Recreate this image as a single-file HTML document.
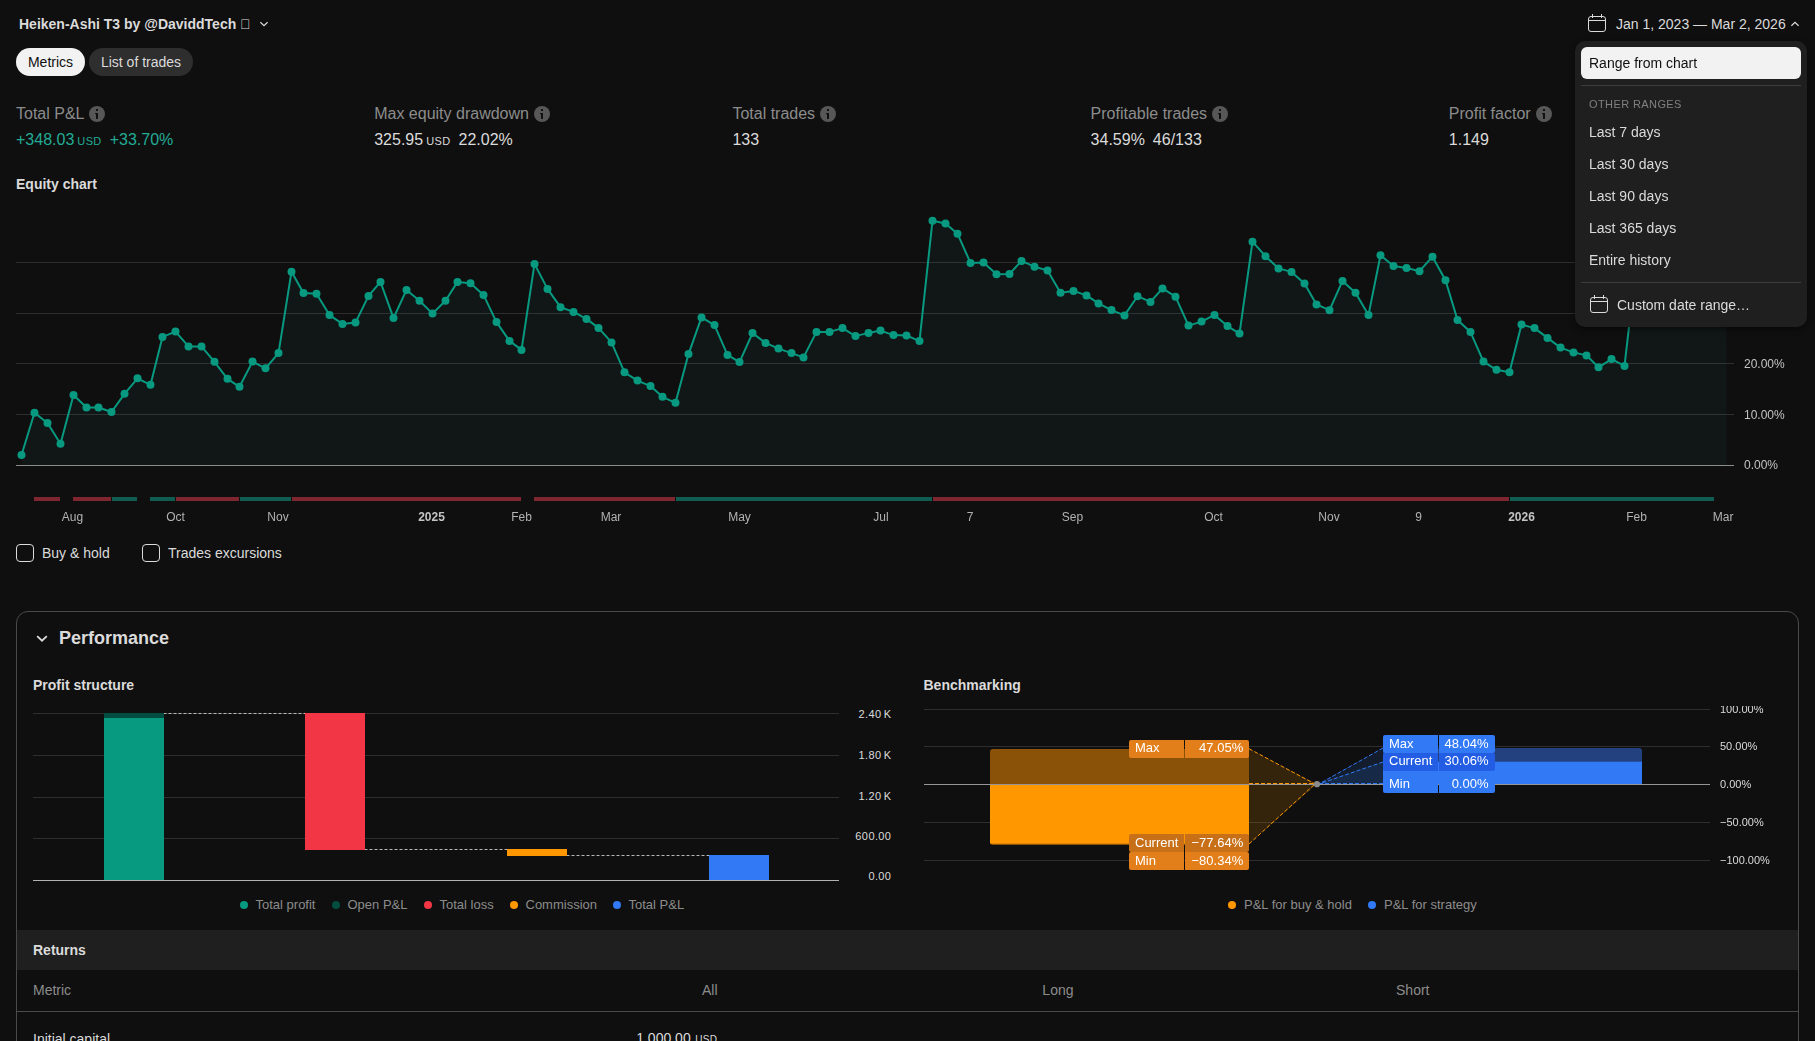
<!DOCTYPE html>
<html><head><meta charset="utf-8"><title>Strategy report</title>
<style>
*{box-sizing:border-box;margin:0;padding:0}
html,body{width:1815px;height:1041px;overflow:hidden;background:#0f0f0f}
body{position:relative;font-family:"Liberation Sans",sans-serif;font-size:14px;color:#dbdbdb}
.abs{position:absolute;white-space:nowrap}
.t14{font-size:14px;line-height:18px}
.b{font-weight:bold}
.lbl{font-size:16px;line-height:24px;color:#8c8c8c}
.val{font-size:16px;line-height:24px;color:#dbdbdb}
.usd{font-size:11px;letter-spacing:0.4px;margin-left:3px}
.v2{margin-left:8px}
.grn{color:#22ab94}
.info{position:absolute;width:16px;height:16px}
.tl{font-size:12px;line-height:16px;text-align:center;color:#b2b2b2}
.gs{will-change:transform}
.ax{font-size:11px;line-height:14px;color:#dbdbdb}
.ax12{font-size:12px;line-height:16px;color:#c4c4c4}
.lg{font-size:13px;line-height:16px;color:#8c8c8c}
.dot{position:absolute;width:8px;height:8px;border-radius:50%}
.cb{position:absolute;width:18px;height:18px;border:1.5px solid #dbdbdb;border-radius:4px}
.mi{position:absolute;left:14px;font-size:14px;line-height:18px;color:#dbdbdb}
.tag{position:absolute;height:18px;font-size:13px;line-height:16px;color:#fff}
</style></head><body>

<!-- header -->
<div class="abs b t14" style="left:19px;top:15px;color:#dbdbdb">Heiken-Ashi T3 by @DaviddTech &#xE000;</div>
<svg class="abs" style="left:258px;top:19px" width="12" height="10" viewBox="0 0 12 10"><path d="M2.4 3.3 L6 6.6 L9.6 3.3" fill="none" stroke="#dbdbdb" stroke-width="1.2"/></svg>

<!-- pills -->
<div class="abs t14" style="left:16px;top:48px;width:69px;height:28px;border-radius:14px;background:#f2f2f2;color:#0f0f0f;text-align:center;line-height:28px">Metrics</div>
<div class="abs t14" style="left:89px;top:48px;width:104px;height:28px;border-radius:14px;background:#2e2e2e;color:#dbdbdb;text-align:center;line-height:28px">List of trades</div>

<!-- metrics -->
<div class="abs lbl" style="left:16px;top:102px">Total P&amp;L</div>
<div class="abs val grn" style="left:16px;top:128px">+348.03<span class="usd">USD</span><span class="v2">+33.70%</span></div>
<div class="abs lbl" style="left:374.2px;top:102px">Max equity drawdown</div>
<div class="abs val" style="left:374.2px;top:128px">325.95<span class="usd">USD</span><span class="v2">22.02%</span></div>
<div class="abs lbl" style="left:732.4px;top:102px">Total trades</div>
<div class="abs val" style="left:732.4px;top:128px">133</div>
<div class="abs lbl" style="left:1090.6px;top:102px">Profitable trades</div>
<div class="abs val" style="left:1090.6px;top:128px">34.59%<span class="v2">46/133</span></div>
<div class="abs lbl" style="left:1448.8px;top:102px">Profit factor</div>
<div class="abs val" style="left:1448.8px;top:128px">1.149</div>
<svg class="info" style="left:89px;top:106px" viewBox="0 0 16 16"><circle cx="8" cy="8" r="8" fill="#575757"/><rect x="7" y="7.1" width="2" height="5.8" fill="#0f0f0f"/><rect x="5.9" y="7.1" width="2" height="1" fill="#0f0f0f"/><rect x="7" y="3.05" width="2" height="1.9" rx="0.3" fill="#0f0f0f"/></svg>
<svg class="info" style="left:534px;top:106px" viewBox="0 0 16 16"><circle cx="8" cy="8" r="8" fill="#575757"/><rect x="7" y="7.1" width="2" height="5.8" fill="#0f0f0f"/><rect x="5.9" y="7.1" width="2" height="1" fill="#0f0f0f"/><rect x="7" y="3.05" width="2" height="1.9" rx="0.3" fill="#0f0f0f"/></svg>
<svg class="info" style="left:820px;top:106px" viewBox="0 0 16 16"><circle cx="8" cy="8" r="8" fill="#575757"/><rect x="7" y="7.1" width="2" height="5.8" fill="#0f0f0f"/><rect x="5.9" y="7.1" width="2" height="1" fill="#0f0f0f"/><rect x="7" y="3.05" width="2" height="1.9" rx="0.3" fill="#0f0f0f"/></svg>
<svg class="info" style="left:1212px;top:106px" viewBox="0 0 16 16"><circle cx="8" cy="8" r="8" fill="#575757"/><rect x="7" y="7.1" width="2" height="5.8" fill="#0f0f0f"/><rect x="5.9" y="7.1" width="2" height="1" fill="#0f0f0f"/><rect x="7" y="3.05" width="2" height="1.9" rx="0.3" fill="#0f0f0f"/></svg>
<svg class="info" style="left:1536px;top:106px" viewBox="0 0 16 16"><circle cx="8" cy="8" r="8" fill="#575757"/><rect x="7" y="7.1" width="2" height="5.8" fill="#0f0f0f"/><rect x="5.9" y="7.1" width="2" height="1" fill="#0f0f0f"/><rect x="7" y="3.05" width="2" height="1.9" rx="0.3" fill="#0f0f0f"/></svg>

<div class="abs b t14" style="left:16px;top:175px;color:#dbdbdb">Equity chart</div>

<svg class="abs" style="left:0;top:200px" width="1815" height="290" viewBox="0 200 1815 290">
<line x1="16" x2="1734" y1="262.5" y2="262.5" stroke="#2e2e2e" stroke-width="1"/>
<line x1="16" x2="1734" y1="313.5" y2="313.5" stroke="#2e2e2e" stroke-width="1"/>
<line x1="16" x2="1734" y1="363.5" y2="363.5" stroke="#2e2e2e" stroke-width="1"/>
<line x1="16" x2="1734" y1="414.5" y2="414.5" stroke="#2e2e2e" stroke-width="1"/>
<polygon points="21.5,465 21.5,455 34.5,412.8 47.5,423 60.5,443.8 73.5,395 86.5,407.5 98.5,407.5 111.5,412 124.5,393.8 137.5,378.3 150.5,384.8 162.5,336.9 175.5,331.6 188.5,346.4 201.5,346.4 214.5,361.8 227.5,378.8 239.5,386.8 252.5,361.6 265.5,368.3 278.5,353.1 291.5,271.7 303.5,292.9 316.5,293.7 329.5,315.1 342.5,323.9 355.5,322.6 368.5,295.9 380.5,281.9 393.5,318.1 406.5,289.9 419.5,300.7 432.5,313.6 445.5,300.7 457.5,281.9 470.5,283.2 483.5,294.9 496.5,322.1 509.5,340.9 521.5,349.9 534.5,263.9 547.5,288.9 560.5,307.2 573.5,311.9 586.5,318.9 598.5,327.9 611.5,342.4 624.5,372.3 637.5,380.6 650.5,386.1 662.5,396.8 675.5,402.8 688.5,354.1 701.5,317.4 714.5,325.1 727.5,354.9 739.5,362.1 752.5,333.1 765.5,342.9 778.5,348.6 791.5,353.1 803.5,357.4 816.5,331.9 829.5,331.9 842.5,328.1 855.5,336.1 868.5,332.9 880.5,330.6 893.5,335.1 906.5,335.4 919.5,341.1 932.5,220.7 945.5,223.5 957.5,233.7 970.5,262.9 983.5,262.4 996.5,274.2 1009.5,273.9 1021.5,260.9 1034.5,266.7 1047.5,270.4 1060.5,292.7 1073.5,290.9 1086.5,295.4 1098.5,303.4 1111.5,310.1 1124.5,315.4 1137.5,296.2 1150.5,301.9 1162.5,288.4 1175.5,296.7 1188.5,325.6 1201.5,321.6 1214.5,314.9 1227.5,326.1 1239.5,333.6 1252.5,241.7 1265.5,256.2 1278.5,268.4 1291.5,271.9 1304.5,283.4 1316.5,304.4 1329.5,310.2 1342.5,280.9 1355.5,292.7 1368.5,314.9 1380.5,255.2 1393.5,265.9 1406.5,267.9 1419.5,271.2 1432.5,256.7 1445.5,280.2 1457.5,319.9 1470.5,332.1 1483.5,361.6 1496.5,369.8 1509.5,372.3 1521.5,324.6 1534.5,328.1 1547.5,337.9 1560.5,347.6 1573.5,352.4 1586.5,355.4 1598.5,367.3 1611.5,359.1 1624.5,365.9 1637.5,254 1650.5,262 1662.5,258 1675.5,270 1688.5,266 1701.5,280 1714.5,287 1726.5,293.8 1726.5,465" fill="#22ab94" fill-opacity="0.055"/>
<line x1="16" x2="1734" y1="465.5" y2="465.5" stroke="#8c8c8c" stroke-width="1"/>
<polyline points="21.5,455 34.5,412.8 47.5,423 60.5,443.8 73.5,395 86.5,407.5 98.5,407.5 111.5,412 124.5,393.8 137.5,378.3 150.5,384.8 162.5,336.9 175.5,331.6 188.5,346.4 201.5,346.4 214.5,361.8 227.5,378.8 239.5,386.8 252.5,361.6 265.5,368.3 278.5,353.1 291.5,271.7 303.5,292.9 316.5,293.7 329.5,315.1 342.5,323.9 355.5,322.6 368.5,295.9 380.5,281.9 393.5,318.1 406.5,289.9 419.5,300.7 432.5,313.6 445.5,300.7 457.5,281.9 470.5,283.2 483.5,294.9 496.5,322.1 509.5,340.9 521.5,349.9 534.5,263.9 547.5,288.9 560.5,307.2 573.5,311.9 586.5,318.9 598.5,327.9 611.5,342.4 624.5,372.3 637.5,380.6 650.5,386.1 662.5,396.8 675.5,402.8 688.5,354.1 701.5,317.4 714.5,325.1 727.5,354.9 739.5,362.1 752.5,333.1 765.5,342.9 778.5,348.6 791.5,353.1 803.5,357.4 816.5,331.9 829.5,331.9 842.5,328.1 855.5,336.1 868.5,332.9 880.5,330.6 893.5,335.1 906.5,335.4 919.5,341.1 932.5,220.7 945.5,223.5 957.5,233.7 970.5,262.9 983.5,262.4 996.5,274.2 1009.5,273.9 1021.5,260.9 1034.5,266.7 1047.5,270.4 1060.5,292.7 1073.5,290.9 1086.5,295.4 1098.5,303.4 1111.5,310.1 1124.5,315.4 1137.5,296.2 1150.5,301.9 1162.5,288.4 1175.5,296.7 1188.5,325.6 1201.5,321.6 1214.5,314.9 1227.5,326.1 1239.5,333.6 1252.5,241.7 1265.5,256.2 1278.5,268.4 1291.5,271.9 1304.5,283.4 1316.5,304.4 1329.5,310.2 1342.5,280.9 1355.5,292.7 1368.5,314.9 1380.5,255.2 1393.5,265.9 1406.5,267.9 1419.5,271.2 1432.5,256.7 1445.5,280.2 1457.5,319.9 1470.5,332.1 1483.5,361.6 1496.5,369.8 1509.5,372.3 1521.5,324.6 1534.5,328.1 1547.5,337.9 1560.5,347.6 1573.5,352.4 1586.5,355.4 1598.5,367.3 1611.5,359.1 1624.5,365.9 1637.5,254 1650.5,262 1662.5,258 1675.5,270 1688.5,266 1701.5,280 1714.5,287 1726.5,293.8" fill="none" stroke="#089981" stroke-width="2" stroke-linejoin="round"/>
<circle cx="21.5" cy="455" r="4" fill="#089981"/>
<circle cx="34.5" cy="412.8" r="4" fill="#089981"/>
<circle cx="47.5" cy="423" r="4" fill="#089981"/>
<circle cx="60.5" cy="443.8" r="4" fill="#089981"/>
<circle cx="73.5" cy="395" r="4" fill="#089981"/>
<circle cx="86.5" cy="407.5" r="4" fill="#089981"/>
<circle cx="98.5" cy="407.5" r="4" fill="#089981"/>
<circle cx="111.5" cy="412" r="4" fill="#089981"/>
<circle cx="124.5" cy="393.8" r="4" fill="#089981"/>
<circle cx="137.5" cy="378.3" r="4" fill="#089981"/>
<circle cx="150.5" cy="384.8" r="4" fill="#089981"/>
<circle cx="162.5" cy="336.9" r="4" fill="#089981"/>
<circle cx="175.5" cy="331.6" r="4" fill="#089981"/>
<circle cx="188.5" cy="346.4" r="4" fill="#089981"/>
<circle cx="201.5" cy="346.4" r="4" fill="#089981"/>
<circle cx="214.5" cy="361.8" r="4" fill="#089981"/>
<circle cx="227.5" cy="378.8" r="4" fill="#089981"/>
<circle cx="239.5" cy="386.8" r="4" fill="#089981"/>
<circle cx="252.5" cy="361.6" r="4" fill="#089981"/>
<circle cx="265.5" cy="368.3" r="4" fill="#089981"/>
<circle cx="278.5" cy="353.1" r="4" fill="#089981"/>
<circle cx="291.5" cy="271.7" r="4" fill="#089981"/>
<circle cx="303.5" cy="292.9" r="4" fill="#089981"/>
<circle cx="316.5" cy="293.7" r="4" fill="#089981"/>
<circle cx="329.5" cy="315.1" r="4" fill="#089981"/>
<circle cx="342.5" cy="323.9" r="4" fill="#089981"/>
<circle cx="355.5" cy="322.6" r="4" fill="#089981"/>
<circle cx="368.5" cy="295.9" r="4" fill="#089981"/>
<circle cx="380.5" cy="281.9" r="4" fill="#089981"/>
<circle cx="393.5" cy="318.1" r="4" fill="#089981"/>
<circle cx="406.5" cy="289.9" r="4" fill="#089981"/>
<circle cx="419.5" cy="300.7" r="4" fill="#089981"/>
<circle cx="432.5" cy="313.6" r="4" fill="#089981"/>
<circle cx="445.5" cy="300.7" r="4" fill="#089981"/>
<circle cx="457.5" cy="281.9" r="4" fill="#089981"/>
<circle cx="470.5" cy="283.2" r="4" fill="#089981"/>
<circle cx="483.5" cy="294.9" r="4" fill="#089981"/>
<circle cx="496.5" cy="322.1" r="4" fill="#089981"/>
<circle cx="509.5" cy="340.9" r="4" fill="#089981"/>
<circle cx="521.5" cy="349.9" r="4" fill="#089981"/>
<circle cx="534.5" cy="263.9" r="4" fill="#089981"/>
<circle cx="547.5" cy="288.9" r="4" fill="#089981"/>
<circle cx="560.5" cy="307.2" r="4" fill="#089981"/>
<circle cx="573.5" cy="311.9" r="4" fill="#089981"/>
<circle cx="586.5" cy="318.9" r="4" fill="#089981"/>
<circle cx="598.5" cy="327.9" r="4" fill="#089981"/>
<circle cx="611.5" cy="342.4" r="4" fill="#089981"/>
<circle cx="624.5" cy="372.3" r="4" fill="#089981"/>
<circle cx="637.5" cy="380.6" r="4" fill="#089981"/>
<circle cx="650.5" cy="386.1" r="4" fill="#089981"/>
<circle cx="662.5" cy="396.8" r="4" fill="#089981"/>
<circle cx="675.5" cy="402.8" r="4" fill="#089981"/>
<circle cx="688.5" cy="354.1" r="4" fill="#089981"/>
<circle cx="701.5" cy="317.4" r="4" fill="#089981"/>
<circle cx="714.5" cy="325.1" r="4" fill="#089981"/>
<circle cx="727.5" cy="354.9" r="4" fill="#089981"/>
<circle cx="739.5" cy="362.1" r="4" fill="#089981"/>
<circle cx="752.5" cy="333.1" r="4" fill="#089981"/>
<circle cx="765.5" cy="342.9" r="4" fill="#089981"/>
<circle cx="778.5" cy="348.6" r="4" fill="#089981"/>
<circle cx="791.5" cy="353.1" r="4" fill="#089981"/>
<circle cx="803.5" cy="357.4" r="4" fill="#089981"/>
<circle cx="816.5" cy="331.9" r="4" fill="#089981"/>
<circle cx="829.5" cy="331.9" r="4" fill="#089981"/>
<circle cx="842.5" cy="328.1" r="4" fill="#089981"/>
<circle cx="855.5" cy="336.1" r="4" fill="#089981"/>
<circle cx="868.5" cy="332.9" r="4" fill="#089981"/>
<circle cx="880.5" cy="330.6" r="4" fill="#089981"/>
<circle cx="893.5" cy="335.1" r="4" fill="#089981"/>
<circle cx="906.5" cy="335.4" r="4" fill="#089981"/>
<circle cx="919.5" cy="341.1" r="4" fill="#089981"/>
<circle cx="932.5" cy="220.7" r="4" fill="#089981"/>
<circle cx="945.5" cy="223.5" r="4" fill="#089981"/>
<circle cx="957.5" cy="233.7" r="4" fill="#089981"/>
<circle cx="970.5" cy="262.9" r="4" fill="#089981"/>
<circle cx="983.5" cy="262.4" r="4" fill="#089981"/>
<circle cx="996.5" cy="274.2" r="4" fill="#089981"/>
<circle cx="1009.5" cy="273.9" r="4" fill="#089981"/>
<circle cx="1021.5" cy="260.9" r="4" fill="#089981"/>
<circle cx="1034.5" cy="266.7" r="4" fill="#089981"/>
<circle cx="1047.5" cy="270.4" r="4" fill="#089981"/>
<circle cx="1060.5" cy="292.7" r="4" fill="#089981"/>
<circle cx="1073.5" cy="290.9" r="4" fill="#089981"/>
<circle cx="1086.5" cy="295.4" r="4" fill="#089981"/>
<circle cx="1098.5" cy="303.4" r="4" fill="#089981"/>
<circle cx="1111.5" cy="310.1" r="4" fill="#089981"/>
<circle cx="1124.5" cy="315.4" r="4" fill="#089981"/>
<circle cx="1137.5" cy="296.2" r="4" fill="#089981"/>
<circle cx="1150.5" cy="301.9" r="4" fill="#089981"/>
<circle cx="1162.5" cy="288.4" r="4" fill="#089981"/>
<circle cx="1175.5" cy="296.7" r="4" fill="#089981"/>
<circle cx="1188.5" cy="325.6" r="4" fill="#089981"/>
<circle cx="1201.5" cy="321.6" r="4" fill="#089981"/>
<circle cx="1214.5" cy="314.9" r="4" fill="#089981"/>
<circle cx="1227.5" cy="326.1" r="4" fill="#089981"/>
<circle cx="1239.5" cy="333.6" r="4" fill="#089981"/>
<circle cx="1252.5" cy="241.7" r="4" fill="#089981"/>
<circle cx="1265.5" cy="256.2" r="4" fill="#089981"/>
<circle cx="1278.5" cy="268.4" r="4" fill="#089981"/>
<circle cx="1291.5" cy="271.9" r="4" fill="#089981"/>
<circle cx="1304.5" cy="283.4" r="4" fill="#089981"/>
<circle cx="1316.5" cy="304.4" r="4" fill="#089981"/>
<circle cx="1329.5" cy="310.2" r="4" fill="#089981"/>
<circle cx="1342.5" cy="280.9" r="4" fill="#089981"/>
<circle cx="1355.5" cy="292.7" r="4" fill="#089981"/>
<circle cx="1368.5" cy="314.9" r="4" fill="#089981"/>
<circle cx="1380.5" cy="255.2" r="4" fill="#089981"/>
<circle cx="1393.5" cy="265.9" r="4" fill="#089981"/>
<circle cx="1406.5" cy="267.9" r="4" fill="#089981"/>
<circle cx="1419.5" cy="271.2" r="4" fill="#089981"/>
<circle cx="1432.5" cy="256.7" r="4" fill="#089981"/>
<circle cx="1445.5" cy="280.2" r="4" fill="#089981"/>
<circle cx="1457.5" cy="319.9" r="4" fill="#089981"/>
<circle cx="1470.5" cy="332.1" r="4" fill="#089981"/>
<circle cx="1483.5" cy="361.6" r="4" fill="#089981"/>
<circle cx="1496.5" cy="369.8" r="4" fill="#089981"/>
<circle cx="1509.5" cy="372.3" r="4" fill="#089981"/>
<circle cx="1521.5" cy="324.6" r="4" fill="#089981"/>
<circle cx="1534.5" cy="328.1" r="4" fill="#089981"/>
<circle cx="1547.5" cy="337.9" r="4" fill="#089981"/>
<circle cx="1560.5" cy="347.6" r="4" fill="#089981"/>
<circle cx="1573.5" cy="352.4" r="4" fill="#089981"/>
<circle cx="1586.5" cy="355.4" r="4" fill="#089981"/>
<circle cx="1598.5" cy="367.3" r="4" fill="#089981"/>
<circle cx="1611.5" cy="359.1" r="4" fill="#089981"/>
<circle cx="1624.5" cy="365.9" r="4" fill="#089981"/>
<circle cx="1637.5" cy="254" r="4" fill="#089981"/>
<circle cx="1650.5" cy="262" r="4" fill="#089981"/>
<circle cx="1662.5" cy="258" r="4" fill="#089981"/>
<circle cx="1675.5" cy="270" r="4" fill="#089981"/>
<circle cx="1688.5" cy="266" r="4" fill="#089981"/>
<circle cx="1701.5" cy="280" r="4" fill="#089981"/>
<circle cx="1714.5" cy="287" r="4" fill="#089981"/>
<circle cx="1726.5" cy="293.8" r="4" fill="#089981"/>
</svg>
<div class="abs gs" style="left:0;top:0;width:1815px;height:0">
<div class="abs ax12" style="left:1744px;top:356px">20.00%</div>
<div class="abs ax12" style="left:1744px;top:407px">10.00%</div>
<div class="abs ax12" style="left:1744px;top:457px">0.00%</div>
</div>
<div class="abs" style="left:34px;top:497px;width:26px;height:4px;background:#7f2630"></div>
<div class="abs" style="left:73px;top:497px;width:38px;height:4px;background:#7f2630"></div>
<div class="abs" style="left:112px;top:497px;width:25px;height:4px;background:#0f5c50"></div>
<div class="abs" style="left:150px;top:497px;width:25px;height:4px;background:#0f5c50"></div>
<div class="abs" style="left:176px;top:497px;width:63px;height:4px;background:#7f2630"></div>
<div class="abs" style="left:240px;top:497px;width:51px;height:4px;background:#0f5c50"></div>
<div class="abs" style="left:292px;top:497px;width:229px;height:4px;background:#7f2630"></div>
<div class="abs" style="left:534px;top:497px;width:141px;height:4px;background:#7f2630"></div>
<div class="abs" style="left:676px;top:497px;width:256px;height:4px;background:#0f5c50"></div>
<div class="abs" style="left:933px;top:497px;width:575.5px;height:4px;background:#7f2630"></div>
<div class="abs" style="left:1510px;top:497px;width:203.5px;height:4px;background:#0f5c50"></div>
<div class="abs gs" style="left:0;top:0;width:1815px;height:0">
<div class="abs tl" style="left:42.5px;top:509px;width:60px;">Aug</div>
<div class="abs tl" style="left:145.5px;top:509px;width:60px;">Oct</div>
<div class="abs tl" style="left:248px;top:509px;width:60px;">Nov</div>
<div class="abs tl" style="left:401.5px;top:509px;width:60px;font-weight:bold;color:#c4c4c4;">2025</div>
<div class="abs tl" style="left:491.5px;top:509px;width:60px;">Feb</div>
<div class="abs tl" style="left:581px;top:509px;width:60px;">Mar</div>
<div class="abs tl" style="left:709.5px;top:509px;width:60px;">May</div>
<div class="abs tl" style="left:851px;top:509px;width:60px;">Jul</div>
<div class="abs tl" style="left:940px;top:509px;width:60px;">7</div>
<div class="abs tl" style="left:1042.5px;top:509px;width:60px;">Sep</div>
<div class="abs tl" style="left:1183.5px;top:509px;width:60px;">Oct</div>
<div class="abs tl" style="left:1299px;top:509px;width:60px;">Nov</div>
<div class="abs tl" style="left:1388.6px;top:509px;width:60px;">9</div>
<div class="abs tl" style="left:1491.5px;top:509px;width:60px;font-weight:bold;color:#c4c4c4;">2026</div>
<div class="abs tl" style="left:1606.6px;top:509px;width:60px;">Feb</div>
<div class="abs tl" style="left:1693.2px;top:509px;width:60px;">Mar</div>
</div>

<!-- checkboxes -->
<div class="cb" style="left:16px;top:544px"></div>
<div class="abs t14" style="left:42px;top:544px">Buy &amp; hold</div>
<div class="cb" style="left:142px;top:544px"></div>
<div class="abs t14" style="left:168px;top:544px">Trades excursions</div>

<!-- performance panel -->
<div class="abs" style="left:16px;top:611px;width:1783px;height:460px;border:1px solid #4a4a4a;border-radius:12px"></div>
<svg class="abs" style="left:35px;top:632px" width="14" height="12" viewBox="0 0 14 12"><path d="M2.2 4.1 L7 8.7 L11.8 4.1" fill="none" stroke="#dbdbdb" stroke-width="1.8"/></svg>
<div class="abs b" style="left:59px;top:627px;font-size:18px;line-height:22px;color:#dbdbdb">Performance</div>
<div class="abs b t14" style="left:33px;top:676px">Profit structure</div>
<div class="abs b t14" style="left:923.5px;top:676px">Benchmarking</div>

<svg class="abs" style="left:0;top:700px" width="907" height="200" viewBox="0 700 907 200">
<line x1="33" x2="839" y1="713.5" y2="713.5" stroke="#2e2e2e"/>
<line x1="33" x2="839" y1="755.5" y2="755.5" stroke="#2e2e2e"/>
<line x1="33" x2="839" y1="797.5" y2="797.5" stroke="#2e2e2e"/>
<line x1="33" x2="839" y1="838.5" y2="838.5" stroke="#2e2e2e"/>
<rect x="104" y="713" width="60" height="5" fill="#024c40"/>
<rect x="104" y="718" width="60" height="162" fill="#089981"/>
<rect x="305" y="713" width="60" height="137" fill="#f23645"/>
<rect x="507" y="849" width="60" height="7" fill="#ff9800"/>
<rect x="709" y="855" width="60" height="25" fill="#3179f5"/>
<line x1="164" x2="305" y1="713.5" y2="713.5" stroke="#b8b8b8" stroke-dasharray="3 2" stroke-dashoffset="0.5"/>
<line x1="365" x2="507" y1="849.5" y2="849.5" stroke="#b8b8b8" stroke-dasharray="3 2" stroke-dashoffset="0.5"/>
<line x1="567" x2="709" y1="855.5" y2="855.5" stroke="#b8b8b8" stroke-dasharray="3 2" stroke-dashoffset="0.5"/>
<line x1="33" x2="839" y1="880.5" y2="880.5" stroke="#b2b2b2"/>
</svg>
<div class="abs ax" style="left:791.4px;width:100px;text-align:right;letter-spacing:0.4px;word-spacing:-1.3px;top:707px">2.40 K</div>
<div class="abs ax" style="left:791.4px;width:100px;text-align:right;letter-spacing:0.4px;word-spacing:-1.3px;top:748px">1.80 K</div>
<div class="abs ax" style="left:791.4px;width:100px;text-align:right;letter-spacing:0.4px;word-spacing:-1.3px;top:788.5px">1.20 K</div>
<div class="abs ax" style="left:791.4px;width:100px;text-align:right;letter-spacing:0.4px;word-spacing:-1.3px;top:829px">600.00</div>
<div class="abs ax" style="left:791.4px;width:100px;text-align:right;letter-spacing:0.4px;word-spacing:-1.3px;top:869px">0.00</div>
<div class="dot" style="left:240px;top:901px;background:#089981"></div><div class="abs lg" style="left:255.5px;top:897px">Total profit</div>
<div class="dot" style="left:332px;top:901px;background:#024c40"></div><div class="abs lg" style="left:347.5px;top:897px">Open P&amp;L</div>
<div class="dot" style="left:424px;top:901px;background:#f23645"></div><div class="abs lg" style="left:439.5px;top:897px">Total loss</div>
<div class="dot" style="left:510px;top:901px;background:#ff9800"></div><div class="abs lg" style="left:525.5px;top:897px">Commission</div>
<div class="dot" style="left:613px;top:901px;background:#3179f5"></div><div class="abs lg" style="left:628.5px;top:897px">Total P&amp;L</div>
<svg class="abs" style="left:907px;top:700px" width="908" height="200" viewBox="907 700 908 200">
<line x1="924" x2="1710" y1="709.5" y2="709.5" stroke="#2e2e2e"/>
<line x1="924" x2="1710" y1="746.5" y2="746.5" stroke="#2e2e2e"/>
<line x1="924" x2="1710" y1="822.5" y2="822.5" stroke="#2e2e2e"/>
<line x1="924" x2="1710" y1="860.5" y2="860.5" stroke="#2e2e2e"/>
<polygon points="1249,749 1317,784 1249,844" fill="#ff9800" fill-opacity="0.16"/>
<rect x="990" y="749" width="259" height="96" rx="3" fill="#8a5208"/>
<rect x="990" y="784.5" width="259" height="59" fill="#ff9800"/>
<rect x="990" y="840" width="259" height="3.5" rx="3" fill="#ff9800"/>
<polygon points="1383,748 1317,784 1383,784" fill="#3179f5" fill-opacity="0.13"/>
<polygon points="1383,762 1317,784 1383,784" fill="#3179f5" fill-opacity="0.13"/>
<rect x="1383" y="748" width="259" height="37" rx="3" fill="#23407f"/>
<rect x="1383" y="761.7" width="259" height="23" fill="#3179f5"/>
<line x1="924" x2="1710" y1="784.5" y2="784.5" stroke="#969696"/>
<line x1="1249" y1="748.7" x2="1315" y2="784" stroke="#ff9800" stroke-dasharray="4 2"/>
<line x1="1249" y1="844" x2="1315" y2="784" stroke="#ff9800" stroke-dasharray="4 2"/>
<line x1="1249" y1="783.5" x2="1315" y2="783.5" stroke="#ff9800" stroke-dasharray="4 2"/>
<line x1="1383" y1="748" x2="1319" y2="784" stroke="#3179f5" stroke-dasharray="4 2"/>
<line x1="1383" y1="762" x2="1319" y2="784" stroke="#3179f5" stroke-dasharray="4 2"/>
<line x1="1383" y1="783.5" x2="1319" y2="783.5" stroke="#3179f5" stroke-dasharray="4 2"/>
<circle cx="1317" cy="784.2" r="3.1" fill="#8c8c8c"/>
</svg>
<div class="abs gs" style="left:0;top:0;width:1815px;height:0">
<div class="tag" style="left:1129px;top:740px;width:55px;background:#e37f1b;padding-left:6px;border-radius:2px 0 0 2px;line-height:16px">Max</div><div class="tag" style="left:1185px;top:740px;width:64px;background:#e37f1b;text-align:right;padding-right:5.8px;border-radius:0 2px 2px 0;line-height:16px">47.05%</div>
<div class="tag" style="left:1129px;top:834px;width:55px;background:#c77017;padding-left:6px;border-radius:2px 0 0 2px;line-height:18px">Current</div><div class="tag" style="left:1185px;top:834px;width:64px;background:#c77017;text-align:right;padding-right:5.8px;border-radius:0 2px 2px 0;line-height:18px">−77.64%</div>
<div class="tag" style="left:1129px;top:852px;width:55px;background:#e37f1b;padding-left:6px;border-radius:2px 0 0 2px;line-height:18px">Min</div><div class="tag" style="left:1185px;top:852px;width:64px;background:#e37f1b;text-align:right;padding-right:5.8px;border-radius:0 2px 2px 0;line-height:18px">−80.34%</div>
<div class="tag" style="left:1383px;top:735px;width:55px;background:#3179f5;padding-left:6px;border-radius:2px 0 0 2px;line-height:18px">Max</div><div class="tag" style="left:1439px;top:735px;width:56px;background:#3179f5;text-align:right;padding-right:6.5px;border-radius:0 2px 2px 0;line-height:18px">48.04%</div>
<div class="tag" style="left:1383px;top:753px;width:55px;background:#225de4;padding-left:6px;border-radius:2px 0 0 2px;line-height:16px">Current</div><div class="tag" style="left:1439px;top:753px;width:56px;background:#225de4;text-align:right;padding-right:6.5px;border-radius:0 2px 2px 0;line-height:16px">30.06%</div>
<div class="tag" style="left:1383px;top:775px;width:55px;background:#3179f5;padding-left:6px;border-radius:2px 0 0 2px;line-height:18px">Min</div><div class="tag" style="left:1439px;top:775px;width:56px;background:#3179f5;text-align:right;padding-right:6.5px;border-radius:0 2px 2px 0;line-height:18px">0.00%</div>
</div>
<div class="abs gs" style="left:1715px;top:705.5px;width:90px;height:170px;overflow:hidden">
<div class="abs ax" style="left:5px;top:-4.0px">100.00%</div>
<div class="abs ax" style="left:5px;top:33.0px">50.00%</div>
<div class="abs ax" style="left:5px;top:71.0px">0.00%</div>
<div class="abs ax" style="left:5px;top:109.0px">−50.00%</div>
<div class="abs ax" style="left:5px;top:147.0px">−100.00%</div>
</div>
<div class="dot" style="left:1227.5px;top:901px;background:#ff9800"></div><div class="abs lg" style="left:1244.0px;top:897px">P&amp;L for buy &amp; hold</div>
<div class="dot" style="left:1367.5px;top:901px;background:#3179f5"></div><div class="abs lg" style="left:1384.0px;top:897px">P&amp;L for strategy</div>

<!-- returns -->
<div class="abs" style="left:17px;top:930px;width:1781px;height:40px;background:#1f1f1f"></div>
<div class="abs b t14" style="left:33px;top:941px">Returns</div>
<div class="abs t14" style="left:33px;top:981px;color:#8c8c8c">Metric</div>
<div class="abs t14" style="left:617.5px;top:981px;width:100px;text-align:right;color:#8c8c8c">All</div>
<div class="abs t14" style="left:973.5px;top:981px;width:100px;text-align:right;color:#8c8c8c">Long</div>
<div class="abs t14" style="left:1329.5px;top:981px;width:100px;text-align:right;color:#8c8c8c">Short</div>
<div class="abs" style="left:17px;top:1011px;width:1781px;height:1px;background:#4a4a4a"></div>
<div class="abs t14" style="left:33px;top:1030px">Initial capital</div>
<div class="abs t14" style="left:517.5px;top:1029px;width:200px;text-align:right">1,000.00<span class="usd" style="font-size:10px;margin-left:4.5px">USD</span></div>

<!-- date range + dropdown -->
<svg class="abs" style="left:1587px;top:13px" width="20" height="20" viewBox="0 0 20 20"><g fill="none" stroke="#dbdbdb" stroke-width="1"><rect x="1.5" y="3.5" width="17" height="15" rx="2.5"/><path d="M1.5 7.5H18.5M5.5 1V5M14.5 1V5"/></g></svg>
<div class="abs t14" style="left:1616px;top:15px">Jan 1, 2023 — Mar 2, 2026</div>
<svg class="abs" style="left:1789px;top:19px" width="12" height="10" viewBox="0 0 12 10"><path d="M2.4 6.7 L6 3.4 L9.6 6.7" fill="none" stroke="#dbdbdb" stroke-width="1.2"/></svg>

<div class="abs" style="left:1575px;top:41px;width:232px;height:286px;background:#1f1f1f;border-radius:10px;box-shadow:0 2px 6px rgba(0,0,0,.5);will-change:transform">
  <div class="abs" style="left:6px;top:6px;width:220px;height:32px;background:#f2f2f2;border-radius:6px"></div>
  <div class="mi" style="top:13px;color:#0f0f0f">Range from chart</div>
  <div class="abs" style="left:6px;top:44px;width:220px;height:1px;background:#3d3d3d"></div>
  <div class="abs" style="left:14px;top:56px;font-size:11px;line-height:14px;letter-spacing:0.4px;color:#808080">OTHER RANGES</div>
  <div class="mi" style="top:82px">Last 7 days</div>
  <div class="mi" style="top:114px">Last 30 days</div>
  <div class="mi" style="top:146px">Last 90 days</div>
  <div class="mi" style="top:178px">Last 365 days</div>
  <div class="mi" style="top:210px">Entire history</div>
  <div class="abs" style="left:6px;top:241px;width:220px;height:1px;background:#3d3d3d"></div>
  <svg class="abs" style="left:14px;top:253px" width="20" height="20" viewBox="0 0 20 20"><g fill="none" stroke="#dbdbdb" stroke-width="1"><rect x="1.5" y="3.5" width="17" height="15" rx="2.5"/><path d="M1.5 7.5H18.5M5.5 1V5M14.5 1V5"/></g></svg>
  <div class="mi" style="left:42px;top:255px">Custom date range…</div>
</div>
</body></html>
